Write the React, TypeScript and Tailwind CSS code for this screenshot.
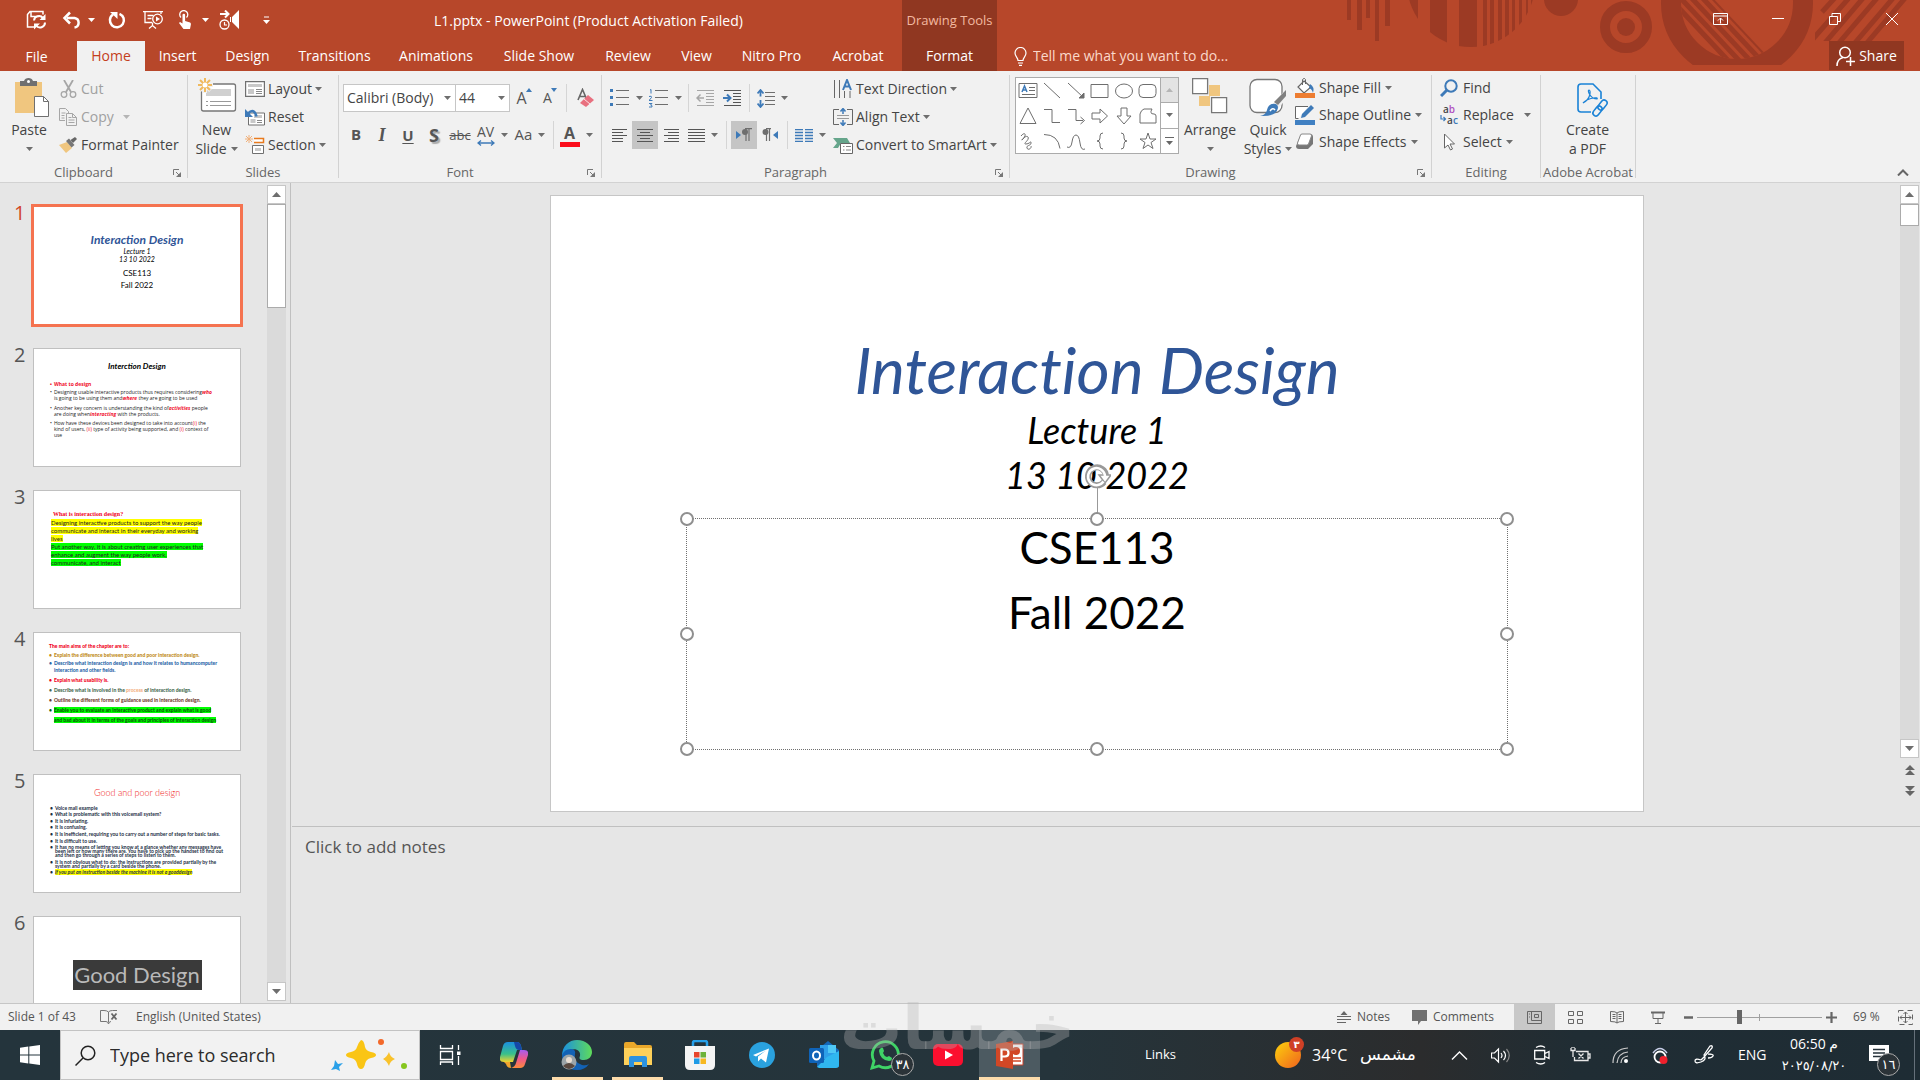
import React from 'react';
import clsx from 'clsx';

const GRAY = '#6e6e6e';
const BLUE = '#3e7ab8';
const SAND = '#f0c67f';

type IconProps = { w: number; h: number; children: React.ReactNode; className?: string };

const Icon: React.FC<IconProps> = ({ w, h, children, className }) => (
  <svg width={w} height={h} viewBox={`0 0 ${w} ${h}`} fill="none" className={clsx('shrink-0', className)} aria-hidden="true">
    {children}
  </svg>
);

const Caret = ({ className }: { className?: string }) => (
  <Icon w={7} h={4} className={className ?? 'text-[#6e6e6e]'}>
    <path d="M0 0h7L3.5 4z" fill="currentColor" />
  </Icon>
);

/* ---------- title bar ---------- */

const HeaderPattern = () => (
  <svg viewBox="1340 0 580 71" className="absolute right-0 top-0 h-[71px] w-[580px]" aria-hidden="true">
    <defs>
      <clipPath id="dome"><circle cx="1471" cy="-17" r="64" /></clipPath>
      <clipPath id="ringIn"><circle cx="1737" cy="3" r="56" /></clipPath>
      <clipPath id="ringCut"><rect x="1640" y="0" width="200" height="65" /></clipPath>
      <clipPath id="rays"><rect x="1815" y="0" width="105" height="41" /></clipPath>
    </defs>
    <g fill="#9c3a24">
      <path d="M1347 0h4v20h-4zM1357 0h5v30h-5zM1366 0h4v18h-4zM1375 0h4v41h-4zM1385 0h5v26h-5z" />
      <g clipPath="url(#dome)">
        <path d="M1405 0h13v50h-13zM1430 0h17v50h-17zM1459 0h18v50h-18zM1483 0h4v50h-4zM1490 0h4v50h-4zM1498 0h4v50h-4zM1505 0h4v50h-4zM1512 0h3v50h-3zM1519 0h3v50h-3zM1526 0h2v50h-2zM1531 0h2v50h-2z" />
      </g>
      <circle cx="1561" cy="-1" r="17" />
      <circle cx="1626" cy="27" r="9" />
    </g>
    <g fill="none" stroke="#9c3a24">
      <circle cx="1626" cy="27" r="21" strokeWidth="10" />
      <circle cx="1737" cy="3" r="66" strokeWidth="20" clipPath="url(#ringCut)" />
      <g clipPath="url(#ringIn)" strokeWidth="5">
        <path d="M1662 -10l75 80M1673 -10l75 80M1684 -10l75 80M1695 -10l75 80" />
        <path d="M1704 -10l75 80" strokeWidth="2" />
      </g>
      <g clipPath="url(#rays)" strokeWidth="5">
        <path d="M1842 -10l-20 22M1856 -10l-44 50M1870 -10l-46 54M1884 -10l-46 54M1900 -10l-46 54M1912 -10l-46 54" />
      </g>
    </g>
  </svg>
);

const QuickAccess = () => (
  <div className="flex h-[39px] items-center pl-[26px] text-white">
    <button aria-label="Save" className="w-[36px]">
      <Icon w={22} h={20}>
        <g stroke="currentColor" strokeWidth="1.5">
          <path d="M8 17H1.5V4.500L4 1.500h13v3M5 1.500v5h8" />
          <path d="M8 10.500a5 5 0 0 1 9-2.500M19 12.500a5 5 0 0 1-9 3" strokeWidth="2" />
        </g>
        <path d="M19.500 4v6h-6zM8 19.500v-6h6z" fill="currentColor" />
      </Icon>
    </button>
    <button aria-label="Undo" className="w-[22px]">
      <Icon w={20} h={18}>
        <path d="M5 7h7.500a4.800 4.800 0 0 1 0 9.500" stroke="currentColor" strokeWidth="2.500" />
        <path d="M8 1.500L2.500 7 8 12.500" stroke="currentColor" strokeWidth="2.500" />
      </Icon>
    </button>
    <span className="flex w-[24px] pl-1"><Caret className="text-white" /></span>
    <button aria-label="Repeat" className="w-[35px]">
      <Icon w={18} h={18}>
        <path d="M11.500 2.800A7 7 0 1 1 5 3.500" stroke="currentColor" strokeWidth="2.500" />
        <path d="M2 1h7.500v7z" fill="currentColor" />
      </Icon>
    </button>
    <button aria-label="Start from beginning" className="w-[34px]">
      <Icon w={21} h={20}>
        <g stroke="currentColor" strokeWidth="1.300">
          <path d="M0 1.700h20M2 2v10.500h7M18 2v2M4.500 5.500h6M4.500 8.500h4M9.500 12.500v4M6 18.500l3.500-3 3.500 3" />
          <circle cx="14.500" cy="9" r="4.800" />
        </g>
        <path d="M13 6.500v5l4-2.500z" fill="currentColor" />
      </Icon>
    </button>
    <button aria-label="Touch mode" className="w-[18px]">
      <Icon w={16} h={20}>
        <path d="M4 7.500a4 4 0 1 1 5.500 0" stroke="currentColor" strokeWidth="1.300" />
        <path d="M5.500 5a1.300 1.300 0 0 1 2.600 0v6l5 1.500q1 .5.8 2L13 19H6.500L2 13l1-1 2.500 1.500z" fill="currentColor" />
      </Icon>
    </button>
    <span className="flex w-[20px] justify-center"><Caret className="text-white" /></span>
    <button aria-label="Rehearse audio" className="ml-1 w-[38px]">
      <Icon w={21} h={20}>
        <path d="M20 0v19l-7-7V7zM12 7v5h-1V7z" fill="currentColor" />
        <path d="M1 4h8M6 .5L9.500 4 6 7.500" stroke="currentColor" strokeWidth="2" />
        <circle cx="5.500" cy="14.500" r="4.500" stroke="currentColor" strokeWidth="1.300" />
        <path d="M5.500 12v3h2.500" stroke="currentColor" strokeWidth="1.200" />
      </Icon>
    </button>
    <button aria-label="Customize toolbar" className="w-[18px]">
      <Icon w={7} h={8} className="mx-auto"><path d="M1 1h5" stroke="currentColor" /><path d="M0 4h7L3.500 8z" fill="currentColor" /></Icon>
    </button>
  </div>
);

const TABS = [
  { name: 'Insert', w: 'w-[65px]' },
  { name: 'Design', w: 'w-[75px]' },
  { name: 'Transitions', w: 'w-[99px]' },
  { name: 'Animations', w: 'w-[104px]' },
  { name: 'Slide Show', w: 'w-[102px]' },
  { name: 'Review', w: 'w-[76px]' },
  { name: 'View', w: 'w-[61px]' },
  { name: 'Nitro Pro', w: 'w-[89px]' },
  { name: 'Acrobat', w: 'w-[84px]' },
];

const Header = () => (
  <header className="relative flex h-[71px] justify-between bg-[#b7472a] text-sm text-white">
    <HeaderPattern />
    <div className="relative flex">
      <div className="w-[902px]">
        <div className="flex h-[41px]">
          <QuickAccess />
          <h1 className="flex-1 self-center pl-[159px] text-sm">L1.pptx - PowerPoint (Product Activation Failed)</h1>
        </div>
        <nav className="flex h-[30px]">
          <button className="w-[77px] pr-1 pt-px">File</button>
          <button className="w-[68px] bg-[#f1f1f1] text-[#c43e1c]">Home</button>
          {TABS.map((t) => (
            <button key={t.name} className={t.w}>{t.name}</button>
          ))}
        </nav>
      </div>
      <div className="flex w-[95px] flex-col bg-[#903721] text-center">
        <span className="h-[41px] pt-[11px] text-[13px] text-[#f3b9a0]">Drawing Tools</span>
        <button className="h-[30px]">Format</button>
      </div>
      <label className="flex h-[30px] items-center self-end pl-[17px]">
        <Icon w={13} h={19}>
          <path d="M4 13.500c0-3-3-4-3-7.500a5.500 5.500 0 0 1 11 0c0 3.500-3 4.500-3 7.500zM4 16h5M5 18.300h3" stroke="#fff" strokeWidth="1.200" />
        </Icon>
        <input aria-label="Tell me" placeholder="Tell me what you want to do..." className="ml-1.5 w-[220px] bg-transparent outline-none placeholder:text-[#fbd9cb]" />
      </label>
    </div>
    <div className="relative flex flex-col items-end">
      <div className="flex h-[41px] items-center pb-1">
        <button aria-label="Ribbon display options" className="grid w-[57px] place-items-center">
          <Icon w={15} h={12}><path d="M.5.5h14v11H.5zM.5 3h14M7.500 10.500V5M5 7.500L7.500 5 10 7.500" stroke="#fff" /></Icon>
        </button>
        <button aria-label="Minimize" className="grid w-[57px] place-items-center"><Icon w={12} h={1}><path d="M0 .500h12" stroke="#fff" strokeWidth="1" /></Icon></button>
        <button aria-label="Restore" className="grid w-[57px] place-items-center"><Icon w={12} h={12}><path d="M.5 3.500h8v8h-8zM3 3V.500h8.500v8H9" stroke="#fff" /></Icon></button>
        <button aria-label="Close" className="grid w-[57px] place-items-center"><Icon w={12} h={12}><path d="M0 0l12 12M12 0L0 12" stroke="#fff" /></Icon></button>
      </div>
      <button className="mr-4 flex h-[29px] w-[75px] items-center justify-center gap-1 bg-[#903721]">
        <Icon w={19} h={20}>
          <circle cx="9" cy="6.500" r="5.300" stroke="#fff" strokeWidth="1.500" />
          <path d="M1 20q0-7 6-8.500M10 15.500h9M14.500 11v9" stroke="#fff" strokeWidth="1.500" />
        </Icon>
        Share
      </button>
    </div>
  </header>
);

/* ---------- ribbon ---------- */

const Group = ({ label, width, launcher, children }: { label: string; width: string; launcher?: boolean; children: React.ReactNode }) => (
  <section className={clsx('flex shrink-0', width)} aria-label={label}>
    <div className="flex flex-1 flex-col">
      <div className="flex h-[92px]">{children}</div>
      <div className={clsx('relative flex h-[18px] items-center justify-center whitespace-nowrap text-[13px] text-[#666]', launcher && 'pr-5')}>
        {label}
        {launcher && (
          <button aria-label={`${label} settings`} className="absolute right-1.5 top-[6px]">
            <Icon w={8} h={8}><path d="M.5 6V.500H6M3 3l3 3" stroke="#777" /><path d="M8 3v5H3z" fill="#777" /></Icon>
          </button>
        )}
      </div>
    </div>
    <div className="my-1 w-px bg-[#d2d2d2]" />
  </section>
);

const Row = ({ icon, label, caret, gap = '', muted, tight }: { icon: React.ReactNode; label: string; caret?: boolean; gap?: string; muted?: boolean; tight?: boolean }) => (
  <button className={clsx('flex items-center whitespace-nowrap', tight ? 'h-[27px] gap-1' : 'h-7 gap-[3px]', muted ? 'text-[#a0a0a0]' : 'text-[#444]')}>
    <span className="grid w-5 place-items-center">{icon}</span>
    {label}
    {caret && <Caret className={clsx(gap, muted ? 'text-[#b5b5b5]' : 'text-[#6e6e6e]')} />}
  </button>
);

const Big = ({ icon, top, bottom, width, noCaret }: { icon: React.ReactNode; top: string; bottom?: string; width: string; noCaret?: boolean }) => (
  <button className={clsx('flex flex-col items-center pt-1.5 text-[#444]', width)}>
    <span className="grid h-[42px] place-items-center">{icon}</span>
    <span className="h-5 leading-[22px]">{top}</span>
    <span className="flex h-5 items-center gap-1 leading-5">{bottom}{!noCaret && <Caret />}</span>
  </button>
);

const Divider = ({ width }: { width: string }) => (
  <span className={clsx('flex h-7 justify-center', width)}><i className="w-px bg-[#d5d5d5]" /></span>
);

const Tool = ({ width, label, on, caret, children }: { width: string; label: string; on?: boolean; caret?: boolean; children: React.ReactNode }) => (
  <button aria-label={label} className={clsx('flex h-7 items-center justify-center text-[#555]', width, caret && 'gap-1.5', on && 'bg-[#c5c5c5]')}>
    {children}
    {caret && <Caret />}
  </button>
);

const lines = (ys: number[], x1: number[], x2: number[]) => ys.map((y, i) => `M${x1[i % x1.length]} ${y}.500H${x2[i % x2.length]}`).join('');

const ClipboardGroup = () => (
  <Group label="Clipboard" width="w-[188px]" launcher>
    <Big
      width="w-[58px]"
      top="Paste"
      icon={
        <Icon w={36} h={40} className="ml-1.5">
          <path d="M1 4h27v31H1z" fill={SAND} />
          <path d="M6 3h4c1-4 8-4 9 0h4v5H6z" fill="#707070" /><circle cx="14.500" cy="3.500" r="1.500" fill="#fff" />
          <path d="M20.500 18.500h9l5 5v15h-14z" fill="#fff" stroke="#707070" /><path d="M29.500 18.500v5h5" stroke="#707070" />
        </Icon>
      }
    />
    <div className="pt-1">
      <Row muted label="Cut" icon={<Icon w={17} h={18}><path d="M4 0l7 12M13 0L6 12" stroke="#a6a6a6" strokeWidth="1.800" /><circle cx="4" cy="14.500" r="2.800" stroke="#a6a6a6" strokeWidth="1.300" /><circle cx="13" cy="14.500" r="2.800" stroke="#a6a6a6" strokeWidth="1.300" /></Icon>} />
      <Row muted label="Copy" caret gap="ml-1.5" icon={<Icon w={18} h={18}><path d="M6 12.500H.500V.500h6l3 3V5M7.500 5.500h6l4 4v8h-10zM13.500 5.500v4h4M9.500 9.500h3M9.500 12h6M9.500 14.500h6M2.500 5h4M2.500 7.500h3M2.500 10h3" stroke="#a6a6a6" /></Icon>} />
      <Row label="Format Painter" icon={<Icon w={18} h={16}><path d="M0 8l8-3 5 6-6 5z" fill={SAND} /><path d="M7 4l3-2.500 5.500 6.500-3 2.500z" fill="#777" /><path d="M11.500 3L16 0l2 2-4 4z" fill="#666" /></Icon>} />
    </div>
  </Group>
);

const SlidesGroup = () => (
  <Group label="Slides" width="w-[151px]">
    <Big
      width="w-[57px]"
      top="New"
      bottom="Slide"
      icon={
        <Icon w={40} h={36} className="-mt-1.5">
          <rect x="4.500" y="7" width="34" height="27" rx="2" fill="#fff" stroke="#777" strokeWidth="1.300" />
          <path d="M9 12h25v7H9z" fill="#d0d0d0" />
          <path d="M13 24.500h21M13 28.500h21M9 24.500h2M9 28.500h2" stroke="#999" />
          <path d="M8 0v16M0 8h16M2.500 2.500l11 11M13.500 2.500l-11 11" stroke="#f1f1f1" strokeWidth="4" />
          <path d="M8 1v14M1 8h14M3 3l10 10M13 3L3 13" stroke="#f0b95c" strokeWidth="2" /><circle cx="8" cy="8" r="2.500" fill="#fff" />
        </Icon>
      }
    />
    <div className="pt-1">
      <Row label="Layout" caret icon={<Icon w={20} h={16}><path d="M.6.600h18.800v14.800H.600z" fill="#fff" stroke="#707070" strokeWidth="1.200" /><path d="M3 3h14v3H3zM3 8h6v5H3z" fill="#c8c8c8" /><path d="M11 8.500h6M11 10.500h6M11 12.500h6" stroke="#888" /></Icon>} />
      <Row label="Reset" icon={<Icon w={20} h={18}><path d="M4 5h15.500v12H3.500V9" fill="#fff" stroke="#707070" /><path d="M9 7h8v3H9zM5.500 11h5v4h-5z" fill="#c8c8c8" /><path d="M12 12.500h5M12 14.500h5" stroke="#888" /><path d="M3 5.500q6-6 8.500 3" stroke={BLUE} strokeWidth="2.500" /><path d="M0 1v8h8z" fill={BLUE} /></Icon>} />
      <Row label="Section" caret icon={<Icon w={20} h={20}><path d="M9 3.500h9.500v4H9" fill="#fff" stroke="#e87a1d" strokeWidth="1.500" /><path d="M7.500 10.500h11v8h-11z" fill="#fff" stroke="#707070" /><path d="M10 13h6v3h-6z" fill="#c8c8c8" /><path d="M4 0v8M0 4h8M1 1l6 6M7 1L1 7" stroke="#f0b07a" /></Icon>} />
    </div>
  </Group>
);

const selectBox = 'h-7 w-full appearance-none border border-[#c6c6c6] bg-white pl-[3px] text-sm text-[#444] outline-none';

const FontGroup = () => (
  <Group label="Font" width="w-[263px]" launcher>
    <div className="flex flex-col gap-[9px] pl-1 pt-[13px]">
      <div className="flex items-center">
        <label className="relative w-[113px]">
          <select aria-label="Font" className={selectBox}><option>Calibri (Body)</option></select>
          <Caret className="absolute right-[5px] top-3 text-[#6e6e6e]" />
        </label>
        <label className="relative -ml-px w-[55px]">
          <select aria-label="Font size" className={selectBox}><option>44</option></select>
          <Caret className="absolute right-[5px] top-3 text-[#6e6e6e]" />
        </label>
        <Tool width="w-7" label="Increase font size"><span className="text-base leading-5">A</span><Icon w={6} h={4} className="-ml-px mb-4"><path d="M0 4h6L3 0z" fill={BLUE} /></Icon></Tool>
        <Tool width="w-6" label="Decrease font size"><span className="text-sm leading-5">A</span><Icon w={6} h={4} className="-ml-px mb-4"><path d="M0 0h6L3 4z" fill={BLUE} /></Icon></Tool>
        <Divider width="w-2" />
        <Tool width="w-[30px]" label="Clear formatting">
          <Icon w={17} h={20}><path d="M1 12L5.500 1.500 10 12M2.500 8.500h6" stroke="#666" strokeWidth="1.600" /><path d="M3 15L11 7l6 5-8 7z" fill="#e8707f" /><path d="M7 11l6 5" stroke="#fff" strokeWidth=".8" /></Icon>
        </Tool>
      </div>
      <div className="flex items-center">
        <Tool width="w-[26px]" label="Bold"><b className="text-[15px]">B</b></Tool>
        <Tool width="w-[26px]" label="Italic"><b className="font-['Liberation_Serif'] text-lg italic">I</b></Tool>
        <Tool width="w-[26px]" label="Underline"><b className="text-[15px] leading-5 underline underline-offset-2">U</b></Tool>
        <Tool width="w-[26px]" label="Shadow"><b className="text-lg text-shadow-[2px_2px_1px_#aaa]">S</b></Tool>
        <Tool width="w-[26px]" label="Strikethrough"><span className="text-[13px] line-through">abc</span></Tool>
        <Tool width="w-[38px]" label="Character spacing" caret>
          <span className="flex flex-col items-center"><span className="text-sm leading-4">AV</span><Icon w={18} h={6}><path d="M1 3h16M4 .5L1 3l3 2.500M14 .5L17 3l-3 2.500" stroke={BLUE} strokeWidth="1.300" /></Icon></span>
        </Tool>
        <Tool width="w-[38px]" label="Change case" caret><span className="text-[15px]">Aa</span></Tool>
        <Divider width="w-2" />
        <Tool width="w-[38px]" label="Font color" caret>
          <span className="flex w-5 flex-col items-center"><b className="text-base leading-[18px]">A</b><i className="h-[5px] w-full bg-[#fb0d1b]" /></span>
        </Tool>
      </div>
    </div>
  </Group>
);

const ParagraphGroup = () => (
  <Group label="Paragraph" width="w-[408px]" launcher>
    <div className="flex w-[231px] flex-col gap-[9px] pl-1 pt-[13px]">
      <div className="flex items-center">
        <Tool width="w-[40px]" label="Bullets" caret><Icon w={20} h={18}><path d="M0 0h3v3H0zM0 7h3v3H0zM0 14h3v3H0z" fill={BLUE} /><path d={lines([1, 8, 15], [6], [19])} stroke={GRAY} /></Icon></Tool>
        <Tool width="w-[38px]" label="Numbering" caret>
          <Icon w={20} h={19}><path d="M1 1l1-.5v4M0 7.500q3-1 2.500 1L0 11.500h3.500M0 14.500h3l-1.500 1.500q2 0 1.500 2H0" stroke={BLUE} /><path d={lines([1, 8, 15], [6], [19])} stroke={GRAY} /></Icon>
        </Tool>
        <Divider width="w-2" />
        <Tool width="w-[27px]" label="Decrease indent"><Icon w={19} h={17}><path d={lines([0, 3, 6, 9, 12, 15], [1, 10, 10, 10, 10, 1], [18])} stroke="#a6a6a6" /><path d="M8 8H1M4.500 4.500L1 8l3.500 3.500" stroke="#a6a6a6" strokeWidth="1.500" /></Icon></Tool>
        <Tool width="w-[26px]" label="Increase indent"><Icon w={19} h={17}><path d={lines([0, 3, 6, 9, 12, 15], [1, 10, 10, 10, 10, 1], [18])} stroke="#555" /><path d="M0 8h7M4 4.500L7.500 8 4 11.500" stroke={BLUE} strokeWidth="2" /></Icon></Tool>
        <Divider width="w-2" />
        <Tool width="w-[38px]" label="Line spacing" caret><Icon w={18} h={19}><path d={lines([3, 7, 11, 15], [8], [18])} stroke={GRAY} /><path d="M3.500 2v5.500M3.500 11v6M.5 4.500l3-3.500 3 3.500M.5 14.500l3 3.500 3-3.500" stroke={BLUE} strokeWidth="1.800" /></Icon></Tool>
      </div>
      <div className="flex items-center">
        <Tool width="w-[26px]" label="Align left"><Icon w={15} h={13}><path d={lines([0, 3, 6, 9], [0], [15, 11])} stroke="#555" /><path d="M0 12.500h11" stroke="#555" /></Icon></Tool>
        <Tool width="w-[26px]" label="Center" on><Icon w={16} h={13}><path d={lines([0, 3, 6, 9, 12], [0, 3], [16, 13])} stroke="#555" /></Icon></Tool>
        <Tool width="w-[26px]" label="Align right"><Icon w={15} h={13}><path d={lines([0, 3, 6, 9, 12], [0, 4], [15])} stroke="#555" /></Icon></Tool>
        <Tool width="w-[38px]" label="Justify" caret><Icon w={17} h={13}><path d={lines([0, 3, 6, 9, 12], [0], [17])} stroke="#555" /></Icon></Tool>
        <Divider width="w-[9px]" />
        <Tool width="w-[26px]" label="Left to right" on><Icon w={16} h={14}><path d="M0 3v8l5-4z" fill={BLUE} /><path d="M10 1v12M13 1v12M9 .700h7" stroke={GRAY} strokeWidth="1.200" /><circle cx="9" cy="4" r="3" fill={GRAY} /></Icon></Tool>
        <Tool width="w-[26px]" label="Right to left"><Icon w={16} h={14}><path d="M16 3v8l-5-4z" fill={BLUE} /><path d="M4.500 1v12M7.500 1v12M4 .700h5" stroke={GRAY} strokeWidth="1.200" /><circle cx="3.500" cy="4" r="3" fill={GRAY} /></Icon></Tool>
        <Divider width="w-2" />
        <Tool width="w-[38px]" label="Columns" caret><Icon w={18} h={13}><path d={lines([0, 3, 6, 9, 12], [0], [8])} stroke={BLUE} strokeWidth="1.400" /><path d={lines([0, 3, 6, 9, 12], [10], [18])} stroke={BLUE} strokeWidth="1.400" /></Icon></Tool>
      </div>
    </div>
    <div className="pt-1">
      <Row label="Text Direction" caret icon={<Icon w={20} h={20}><path d="M1.500 1v18M6.500 1v18M11.500 12v7M17 12v7" stroke="#666" /><path d="M10 11L14 1l4 10M11.500 7.500h5" stroke={BLUE} strokeWidth="2" /></Icon>} />
      <Row label="Align Text" caret icon={<Icon w={20} h={18}><path d="M6 1.500H.500v15H6M14 1.500h5.500v15H14" stroke="#666" /><path d="M4 7.500h12M4 10.500h12" stroke="#999" /><path d="M10 1v5M10 12v5M7.500 3.500L10 .500l2.500 3M7.500 14.500l2.500 3 2.500-3" stroke={BLUE} strokeWidth="1.500" /></Icon>} />
      <Row label="Convert to SmartArt" caret icon={<Icon w={20} h={17}><path d="M0 1h14l3 5h-9l-3 5H0l4-5z" fill="#65a58b" /><path d="M7.500 6.500h12v10h-12z" fill="#fff" stroke="#666" /><path d="M10 9.500h1.500M13 9.500h5M10 13h1.500M13 13h5" stroke="#888" /></Icon>} />
    </div>
  </Group>
);

const SHAPES: React.ReactNode[] = [
  <g key="tx"><path d="M1 2.500h18v14H1z" /><path d="M11 6.500h6M11 9.500h6M4 13.500h13" /><path d="M4 11l2.500-6L9 11M5 9h3" stroke={BLUE} strokeWidth="1.500" /></g>,
  <path key="ln" d="M2 2l16 15" />,
  <g key="ar"><path d="M2 2l16 15" /><path d="M13 17h5v-5z" fill={GRAY} /></g>,
  <path key="re" d="M1 3.500h17v13H1z" />,
  <ellipse key="el" cx="10" cy="10" rx="8.500" ry="7" />,
  <rect key="rr" x="1" y="3.500" width="17" height="13" rx="4" />,
  <path key="tr" d="M10 2l8 15.500H2z" />,
  <path key="ec" d="M2 3.500h8v13h8" />,
  <g key="ea"><path d="M2 3.500h8v11h7" /><path d="M14.500 11l4 3.500-4 3.500" /></g>,
  <path key="ra" d="M2 7h8V3l7.500 7-7.500 7v-4H2z" />,
  <path key="da" d="M7 2h6v8h4l-7 8-7-8h4z" />,
  <path key="ff" d="M2 17V8q1-4 4-5h8q-3 5 2 5 2 0 2 2v7z" />,
  <path key="sc" d="M3 5c4-5 6-1 2 3s3-5 5-2-6 7-2 7 5-4 5-1-5 2-4 5 5 0 4-2" />,
  <path key="ac" d="M2 3.500q14 0 16 14" />,
  <path key="cv" d="M1 16q4 2 5-5t4-7 4 8 5 6" />,
  <path key="lb" d="M13 2q-3 0-3 3v2q0 3-3 3 3 0 3 3v2q0 3 3 3" />,
  <path key="rb" d="M7 2q3 0 3 3v2q0 3 3 3-3 0-3 3v2q0 3-3 3" />,
  <path key="st" d="M10 2l2 6h6l-5 3.500 2 6-5-3.500-5 3.500 2-6L2 8h6z" />,
];

const DrawingGroup = () => (
  <Group label="Drawing" width="w-[422px]" launcher>
    <div className="ml-[5px] mt-1.5 flex h-[77px] w-[164px] border border-[#ababab] bg-white">
      <div className="grid flex-1 grid-cols-6 grid-rows-3 place-items-center">
        {SHAPES.map((s, i) => (
          <button key={i} aria-label={`Shape ${i + 1}`}><Icon w={20} h={20}><g stroke={GRAY}>{s}</g></Icon></button>
        ))}
      </div>
      <div className="flex w-[18px] flex-col divide-y divide-[#ababab] border-l border-[#ababab]">
        <button aria-label="Scroll up" className="grid flex-1 place-items-center bg-[#e3e3e3]"><Icon w={7} h={4} className="rotate-180"><path d="M0 0h7L3.500 4z" fill="#b5b5b5" /></Icon></button>
        <button aria-label="Scroll down" className="grid flex-1 place-items-center"><Caret /></button>
        <button aria-label="More shapes" className="grid flex-1 place-items-center"><Icon w={9} h={8}><path d="M0 .500h9" stroke="#666" /><path d="M1 4h7L4.500 8z" fill="#666" /></Icon></button>
      </div>
    </div>
    <Big width="w-[62px]" top="Arrange" icon={<Icon w={36} h={36} className="-mt-1"><path d="M17 7h11v11H17zM7 18h11v10H7z" fill={SAND} /><path d="M.600.600h15v15h-15zM19.600 19.600h15v15h-15z" fill="#fff" stroke="#777" strokeWidth="1.300" /></Icon>} />
    <Big
      width="w-[54px]"
      top="Quick"
      bottom="Styles"
      icon={
        <Icon w={38} h={40}>
          <rect x="1" y="1.500" width="32" height="33" rx="7" fill="#fff" stroke="#777" strokeWidth="1.300" />
          <path d="M38 10v10l-10 12-5-5z" fill="#f1f1f1" /><path d="M37 12v6l-8 9-4-3z" fill="#808080" />
          <path d="M23 26q6-1 6 4-2 9-18 8 6-1 7-6 1-5 5-6z" fill={BLUE} /><path d="M21 33q3-4 5-1" stroke="#fff" strokeWidth="1.500" />
        </Icon>
      }
    />
    <div className="pt-[3px]">
      <Row tight label="Shape Fill" caret icon={<Icon w={20} h={20}><path d="M9 3l7 6-7 6-6-6z" fill="#fff" stroke="#666" strokeWidth="1.200" /><path d="M7.500 7V1.500q2-2.500 3 0V6" stroke="#666" /><path d="M15 6q5 3 3 9-1-4-4-5z" fill={BLUE} /><path d="M0 15h20v5H0z" fill="#ed7d31" /></Icon>} />
      <Row tight label="Shape Outline" caret icon={<Icon w={20} h={20}><path d="M13 1.500H.500v12h3" fill="#fff" stroke="#666" /><path d="M6 13l1-4 9-9 3 3-9 9z" fill={BLUE} /><path d="M0 15h20v5H0z" fill="#4080c2" /></Icon>} />
      <Row tight label="Shape Effects" caret icon={<Icon w={20} h={18}><path d="M6 1h9q3 0 3 3v7l-5 5H4q-3 0-3-3z" fill="#777" /><path d="M7 1h8q2 0 1.500 2l-3 8q-.5 1-2 1H4q-2 0-1.500-2l3-8Q6 1 7 1z" fill="#fff" stroke="#888" /></Icon>} />
    </div>
  </Group>
);

const EditingGroup = () => (
  <Group label="Editing" width="w-[109px]">
    <div className="pl-[7px] pt-[3px]">
      <Row tight label="Find" icon={<Icon w={18} h={18}><circle cx="11" cy="7" r="5.700" stroke={BLUE} strokeWidth="2" /><path d="M7 11L1 17" stroke={BLUE} strokeWidth="3" /></Icon>} />
      <Row tight label="Replace" caret gap="ml-1.5" icon={
        <span className="grid text-[10px] font-semibold leading-[11px]">
          <span>a<span className="text-[#b04fc0]">b</span></span>
          <span className="flex"><Icon w={7} h={7}><path d="M1 0v4h4M3.500 2l2 2-2 2" stroke={BLUE} strokeWidth="1.200" /></Icon>a<span className="text-[#3e7ab8]">c</span></span>
        </span>
      } />
      <Row tight label="Select" caret icon={<Icon w={12} h={18}><path d="M1.500 1v14l3.500-3 2.500 5 2-1L7 11h4.500z" fill="#fff" stroke="#666" /></Icon>} />
    </div>
  </Group>
);

const AcrobatGroup = () => (
  <Group label="Adobe Acrobat" width="w-[95px]">
    <Big
      width="w-[93px]"
      top="Create"
      bottom="a PDF"
      noCaret
      icon={
        <Icon w={32} h={37} className="ml-2.5 mt-1">
          <g stroke="#1a82d6" strokeWidth="1.600">
            <path d="M14 30H4q-3 0-3-3V5q0-3 3-3h12l8 8v7" />
            <path d="M6 21c8-4 8-13 6-13s1 9 8 9c2-2-8-2-14 4z" strokeWidth="1.200" />
            <rect x="15" y="26" width="11" height="6" rx="3" transform="rotate(-52 20.500 29)" /><rect x="20" y="20" width="11" height="6" rx="3" transform="rotate(-52 25.500 23)" />
          </g>
        </Icon>
      }
    />
  </Group>
);

const Ribbon = () => (
  <div className="flex h-[112px] border-b border-[#d2d2d2] bg-[#f1f1f1] text-sm">
    <ClipboardGroup />
    <SlidesGroup />
    <FontGroup />
    <ParagraphGroup />
    <DrawingGroup />
    <EditingGroup />
    <AcrobatGroup />
    <button aria-label="Collapse ribbon" className="mb-1.5 ml-auto mr-[11px] self-end"><Icon w={12} h={7}><path d="M1 6.500l5-5 5 5" stroke="#666" strokeWidth="2" /></Icon></button>
  </div>
);

/* ---------- slide thumbnails ---------- */

const Thumb = ({ n, active, children }: { n: number; active?: boolean; children: React.ReactNode }) => (
  <li className="mb-[23px] flex h-[119px]">
    <span className={clsx('w-[33px] pl-[14px] text-xl leading-[14px]', active ? 'text-[#d24726]' : 'text-[#555]')}>{n}</span>
    <div className={clsx("h-[119px] w-[208px] overflow-hidden border bg-white font-['Lato',sans-serif] whitespace-nowrap", active ? 'border-[#f57350] outline-2 outline-[#f57350]' : 'border-[#c0c0c0]')}>
      {children}
    </div>
  </li>
);

const Em = ({ children }: { children: React.ReactNode }) => <b className="italic text-[#f0102c]">{children}</b>;

const Li = ({ className, children }: { className?: string; children: React.ReactNode }) => (
  <li className={clsx('flex gap-0.5', className)}><span>•</span><div>{children}</div></li>
);

const Thumbnails = () => (
  <ol className="min-w-0 flex-1 overflow-hidden pt-[23px]">
    <Thumb n={1} active>
      <div className="flex flex-col items-center pt-[26px]">
        <b className="text-[12px] italic leading-[14px] text-[#2f5597]">Interaction Design</b>
        <i className="text-[7px] leading-[8px]">Lecture 1</i>
        <i className="text-[7px] leading-[8px]">13 10 2022</i>
        <span className="mt-1 text-[8px] leading-[12px]">CSE113</span>
        <span className="text-[8px] leading-[12px]">Fall 2022</span>
      </div>
    </Thumb>
    <Thumb n={2}>
      <b className="block pt-[11px] text-center text-[8px] italic leading-[12px]">Interction Design</b>
      <ul className="pl-4 pt-[9px] font-['Open_Sans',sans-serif] text-[5px] leading-[6px] text-[#222]">
        <Li className="font-bold text-[#f0102c]">What to design</Li>
        <Li className="mt-0.5">Designing usable interactive products thus requires considering<Em>who</Em><br />is going to be using them and<Em>where</Em> they are going to be used</Li>
        <Li className="mt-1">Another key concern is understanding the kind of<Em>activities</Em> people<br />are doing when<Em>interacting</Em> with the products.</Li>
        <Li className="mt-[3px]">How have these devices been designed to take into account<span className="text-[#f0102c]">(i)</span> the<br />kind of users, <span className="text-[#f0102c]">(ii)</span> type of activity being supported, and <span className="text-[#f0102c]">(i)</span> context of<br />use</Li>
      </ul>
    </Thumb>
    <Thumb n={3}>
      <div className="pl-[17px] pt-[18px] text-[6px] leading-[8px] text-[#222]">
        <b className="block pl-0.5 font-['Liberation_Serif',serif] text-[6px] leading-[10px] text-[#f00020]">What is interaction design?</b>
        <span className="bg-[#ffff00]">Designing interactive products to support the way people<br />communicate and interact in their everyday and working<br />lives</span><br />
        <span className="bg-[#00ff00]">Put another way, it is about creating user experiences that<br />enhance and augment the way people work,<br />communicate, and interact</span>
      </div>
    </Thumb>
    <Thumb n={4}>
      <div className="pl-[15px] pt-[10px] font-['Lato',sans-serif] text-[5px] font-black leading-[7px]">
        <p className="text-[#f00020]">The main aims of the chapter are to:</p>
        <ul>
          <Li className="mt-0.5 text-[#c08a20]">Explain the difference between good and poor interaction design.</Li>
          <Li className="mt-px text-[#2a66a8]">Describe what interaction design is and how it relates to humancomputer<br />interaction and other fields.</Li>
          <Li className="mt-[3px] text-[#f00020]">Explain what usability is.</Li>
          <Li className="mt-[3px] text-[#476a52]">Describe what is involved in the <span className="text-[#f4b183]">process</span> of interaction design.</Li>
          <Li className="mt-[3px] text-[#703c2c]">Outline the different forms of guidance used in interaction design.</Li>
          <Li className="mt-px leading-[10px] text-[#0a5a0a]"><span className="bg-[#00ff00]">Enable you to evaluate an interactive product and explain what is good<br />and bad about it in terms of the goals and principles of interaction design</span></Li>
        </ul>
      </div>
    </Thumb>
    <Thumb n={5}>
      <p className="pt-3 text-center text-[9px] font-light leading-[11px] text-[#f01818]">Good and poor design</p>
      <ul className="pl-4 pt-2 text-[5px] font-bold leading-[4px] text-[#222e44]">
        <Li>Voice mail example</Li>
        <Li className="mt-0.5">What is problematic with this voicemail system?</Li>
        <Li className="mt-[3px]">It is infuriating.</Li>
        <Li className="mt-0.5">It is confusing.</Li>
        <Li className="mt-[3px]">It is inefficient, requiring you to carry out a number of steps for basic tasks.</Li>
        <Li className="mt-[3px]">It is difficult to use.</Li>
        <Li className="mt-0.5">It has no means of letting you know at a glance whether any messages have<br />been left or how many there are. You have to pick up the handset to find out<br />and then go through a series of steps to listen to them.</Li>
        <Li className="mt-[3px]">It is not obvious what to do: the instructions are provided partially by the<br />system and partially by a card beside the phone.</Li>
        <Li className="mt-0.5"><i className="bg-[#ffff00]">If you put an instruction beside the machine it is not a gooddesign</i></Li>
      </ul>
    </Thumb>
    <Thumb n={6}>
      <p className="mx-auto mt-[43px] h-[30px] w-[129px] bg-[#3a3a3a] text-center text-[22px] leading-[30px] text-[#b9b9b9]">Good Design</p>
    </Thumb>
  </ol>
);

const ScrollButton = ({ up }: { up?: boolean }) => (
  <button aria-label={up ? 'Scroll up' : 'Scroll down'} className="grid h-[19px] w-full shrink-0 place-items-center border border-[#c6c6c6] bg-white">
    <Icon w={9} h={5} className={up ? 'rotate-180' : ''}><path d="M0 0h9L4.500 5z" fill="#6e6e6e" /></Icon>
  </button>
);

/* ---------- slide editor ---------- */

const HANDLES = [
  'left-0 top-0', 'left-1/2 top-0', 'left-full top-0', 'left-0 top-1/2',
  'left-full top-1/2', 'left-0 top-full', 'left-1/2 top-full', 'left-full top-full',
];

const Editor = () => (
  <div className="flex min-h-0 flex-1">
    <div className="flex flex-1 items-center justify-center pb-0.5 pl-0.5">
      <div className="flex aspect-[1094/617] w-[68.1%] flex-col items-center border border-[#c6c6c6] bg-white text-center font-['Lato',sans-serif] text-black">
        <div className="flex h-[322px] flex-col justify-end pb-5 italic">
          <h2 className="text-[64px] leading-[76px] text-[#2f5597] [font-variant-ligatures:none]">Interaction Design</h2>
          <p className="text-4xl leading-[45px]">Lecture 1<br />13 10 2022</p>
        </div>
        <div className="relative h-[232px] w-[75.3%] border border-dotted border-[#707070] text-[44px]">
          <p className="leading-[57px]">CSE113</p>
          <p className="mt-1 leading-[65px]">Fall 2022</p>
          <span className="absolute bottom-full left-1/2 h-8 w-px bg-[#999]" />
          <Icon w={28} h={28} className="absolute -top-14 left-1/2 -translate-x-1/2">
            <path d="M21 19a9 9 0 1 1 2-6" stroke="#999" strokeWidth="6" /><path d="M16 12h12l-6 8z" fill="#fff" stroke="#999" strokeWidth="1.500" />
            <path d="M20.500 18.500a8.500 8.500 0 1 1 1.500-5.500" stroke="#fff" strokeWidth="2.500" />
          </Icon>
          {HANDLES.map((pos) => (
            <span key={pos} className={clsx('absolute size-[14px] -translate-x-1/2 -translate-y-1/2 rounded-full border-2 border-[#8f8f8f] bg-white', pos)} />
          ))}
        </div>
      </div>
    </div>
    <div className="flex w-5 flex-col pt-0.5 pr-px">
      <ScrollButton up />
      <div className="flex-1 bg-[#dadada]"><div className="h-[22px] border border-[#ababab] bg-white" /></div>
      <ScrollButton />
      <div className="flex h-[68px] flex-col items-center gap-[11px] pt-[7px]">
        <button aria-label="Previous slide"><Icon w={10} h={10}><path d="M0 5h10L5 0zM0 10h10L5 5z" fill="#666" /></Icon></button>
        <button aria-label="Next slide"><Icon w={10} h={10}><path d="M0 0h10L5 5zM0 5h10l-5 5z" fill="#666" /></Icon></button>
      </div>
    </div>
  </div>
);

/* ---------- status bar ---------- */

const StatusBar = () => (
  <footer className="relative flex h-[27px] shrink-0 items-center border-t border-[#c6c6c6] bg-[#f1f1f1] text-[12px] text-[#555]">
    <span className="w-[100px] pl-2">Slide 1 of 43</span>
    <Icon w={18} h={16}><path d="M8.500 13.500V3Q7 1.500 4 1.500H.500v11H6q2 0 2.500 2.500.5-2.500 2.500-2.500M8.500 3q1-1.500 4-1.500h4.500" stroke="#777" /><path d="M11.500 4.500l5 6M16.500 4.500l-5 6" stroke="#666" strokeWidth="1.800" /></Icon>
    <span className="pl-[18px]">English (United States)</span>
    <div className="ml-auto flex h-full items-center">
      <button className="mr-[22px] flex items-center gap-1.5"><Icon w={14} h={13}><path d="M3.500 4L7 0l3.500 4z" fill="#666" /><path d="M0 5.500h14M0 8.500h14M0 11.500h9" stroke="#666" /></Icon>Notes</button>
      <button className="mr-5 flex items-center gap-1.5"><Icon w={15} h={15}><path d="M0 0h15v11H9l-3 4v-4H0z" fill="#707070" /></Icon>Comments</button>
      <button aria-label="Normal view" className="grid h-full w-[41px] place-items-center bg-[#c8c8c8]"><Icon w={15} h={13}><path d="M.500.500h14v12H.500zM4.500.500v9M4.500 9.500h10M7.500 3.500h4v3h-4zM2 3h1M2 6h1" stroke="#666" /></Icon></button>
      <button aria-label="Slide sorter" className="grid w-[41px] place-items-center"><Icon w={15} h={13}><path d="M.500.500h5v4h-5zM9.500.500h5v4h-5zM.500 8.500h5v4h-5zM9.500 8.500h5v4h-5z" stroke="#666" /></Icon></button>
      <button aria-label="Reading view" className="grid w-[41px] place-items-center"><Icon w={14} h={13}><path d="M7 12V2Q6 .500.500.500v10Q6 10.500 7 12q1-1.500 6.500-1.500V.500Q8 .500 7 2M2.500 3.500h3M2.500 5.500h3M2.500 7.500h3M8.500 3.500h3M8.500 5.500h3M8.500 7.500h3" stroke="#666" /></Icon></button>
      <button aria-label="Slide show" className="grid w-[41px] place-items-center"><Icon w={14} h={13}><path d="M0 1.500h14" stroke="#666" strokeWidth="2" /><path d="M2 2v5.500h10V2M7 8v4M4 12.500h6" stroke="#666" /></Icon></button>
      <button aria-label="Zoom out" className="ml-1.5"><Icon w={9} h={3}><path d="M0 1.500h9" stroke="#666" strokeWidth="2.500" /></Icon></button>
      <input
        type="range"
        aria-label="Zoom"
        min={0}
        max={100}
        defaultValue={33}
        className="mx-1 h-4 w-[125px] appearance-none bg-[linear-gradient(#a0a0a0,#a0a0a0),linear-gradient(#a0a0a0,#a0a0a0)] bg-[length:100%_1px,1px_7px] bg-center bg-no-repeat [&::-webkit-slider-thumb]:h-[14px] [&::-webkit-slider-thumb]:w-[5px] [&::-webkit-slider-thumb]:appearance-none [&::-webkit-slider-thumb]:bg-[#666]"
      />
      <button aria-label="Zoom in"><Icon w={11} h={11}><path d="M0 5.500h11M5.500 0v11" stroke="#666" strokeWidth="2.200" /></Icon></button>
      <span className="w-[61px] whitespace-nowrap pl-4">69 %</span>
      <button aria-label="Fit slide" className="mr-[7px]"><Icon w={15} h={15}><path d="M.500.500h14v14H.500z" stroke="#666" strokeDasharray="5 4" /><path d="M7.500 2v11M2 7.500h11M5.500 4l2-2 2 2M5.500 11l2 2 2-2M4 5.500l-2 2 2 2M11 5.500l2 2-2 2" stroke="#666" /></Icon></button>
    </div>
    <span dir="rtl" lang="ar" className="pointer-events-none absolute left-[845px] top-0 z-10 w-[230px] text-center font-['DejaVu_Sans',sans-serif] text-[62px] font-bold leading-[48px] text-[#b4b4b4]/35">خمسات</span>
  </footer>
);

/* ---------- taskbar ---------- */

const Badge = ({ children, className }: { children: React.ReactNode; className: string }) => (
  <span className={clsx("absolute grid size-[23px] place-items-center rounded-full border border-[#aaa] bg-[#2b3338] font-['DejaVu_Sans',sans-serif] text-[13px] text-white", className)}>{children}</span>
);

const TaskButton = ({ label, width, open, active, children }: { label: string; width: string; open?: boolean; active?: boolean; children: React.ReactNode }) => (
  <button aria-label={label} className={clsx('relative grid place-items-center', width, active && 'bg-[#4c5a61]')}>
    {children}
    {open && <span className={clsx('absolute bottom-0 h-[3px] bg-[#fddcab]', active ? 'w-full' : 'w-[51px]')} />}
  </button>
);

const Taskbar = () => (
  <div className="flex h-[50px] shrink-0 bg-[linear-gradient(90deg,#24343c_0%,#25343b_55%,#2b2c2d_74%,#202d34_82%,#1e2c34_100%)] text-white">
    <button aria-label="Start" className="grid w-[60px] place-items-center"><Icon w={20} h={20}><path d="M0 2.700l8.300-1.200v8H0zM9.300 1.400L20 0v9.500H9.300zM0 10.500h8.300v8L0 17.300zM9.300 10.500H20V20L9.300 18.500z" fill="#fff" /></Icon></button>
    <label className="flex w-[360px] items-center border border-[#c3c3c3] bg-[#f2f2f2] pl-[14px]">
      <Icon w={21} h={21}><circle cx="13" cy="8" r="6.800" stroke="#222" strokeWidth="1.500" /><path d="M8 13L.500 20.500" stroke="#222" strokeWidth="1.500" /></Icon>
      <input aria-label="Search" placeholder="Type here to search" className="ml-[14px] w-[220px] bg-transparent text-[18px] outline-none placeholder:text-[#2b2b2b]" />
      <Icon w={78} h={32}>
        <path d="M31 1q3 0 4 7 1 4 6 5 5 1 5 3t-5 3-6 6-4 5q-3 0-4-5-1-5-6-6t-5-3 5-3 6-5 4-7z" fill="#fac515" />
        <path d="M59 13q1 5 6 7-5 2-6 7-2-5-6-7 4-2 6-7z" fill="#f9c22b" /><path d="M5 21l3 4 5-1-4 4 1 4-4-2-5 1 3-4z" fill="#2aa0e8" />
        <circle cx="51" cy="3" r="3" fill="#f3692a" /><circle cx="74" cy="27" r="3" fill="#86c61e" />
      </Icon>
    </label>
    <TaskButton label="Task view" width="w-[60px]"><Icon w={22} h={20}><path d="M1.500 0v3.500h12V0M1.500 6.500h12v8h-12zM1.500 20v-3h12v3M19.500 0v5M19.500 11v9" stroke="#fff" strokeWidth="1.300" /><path d="M18 6.500h3.500V10H18z" fill="#fff" /></Icon></TaskButton>
    <TaskButton label="Copilot" width="w-[68px]">
      <Icon w={28} h={26}>
        <defs>
          <linearGradient id="cpA" x1="0" y1="0" x2="0" y2="1"><stop stopColor="#1b8fe0" /><stop offset=".6" stopColor="#39c08a" /><stop offset="1" stopColor="#f2d22e" /></linearGradient>
          <linearGradient id="cpB" x1="0" y1="0" x2="0" y2="1"><stop stopColor="#a65cf0" /><stop offset=".5" stopColor="#f0588a" /><stop offset="1" stopColor="#fb8b3c" /></linearGradient>
        </defs>
        <path d="M8 0h9q3 0 4 4l1 4h-5l-4 12H4q-5 0-4-5L3 4q1-4 5-4z" fill="url(#cpA)" />
        <path d="M20 26h-9q4-1 5-5l4-13h4q5 0 4 5l-3 9q-1 4-5 4z" fill="url(#cpB)" /><path d="M14 0h3q3 0 4 4l1 4h-3q-3 0-4-4z" fill="#1547a8" />
        <path d="M4 20h6l1 6q-4 0-5-4z" fill="#f2a42e" />
      </Icon>
    </TaskButton>
    <TaskButton label="Edge" width="w-[58px]" open>
      <Icon w={32} h={32}>
        <defs><linearGradient id="edge" x1="0" y1="0" x2="1" y2="0"><stop stopColor="#1a8fe0" /><stop offset="1" stopColor="#5fdc5a" /></linearGradient></defs>
        <path d="M1 17C1 7 8 1 16 1c9 0 15 6 15 12 0 5-4 8-8 8-5 0-5-2-4-4 1-6-5-8-9-6Q3 13 1 17z" fill="url(#edge)" />
        <path d="M1 16Q4 9 11 10q4 1 3 5-2 8 7 11 4 1 7-1-4 6-12 6C6 31 1 24 1 16z" fill="#1262b5" />
        <circle cx="8" cy="23" r="7.500" fill="#9ba4a8" /><circle cx="8" cy="21" r="3" fill="#e9ddd2" /><path d="M2 27q6-6 12 0-6 6-12 0z" fill="#59483f" />
      </Icon>
    </TaskButton>
    <TaskButton label="File Explorer" width="w-[63px]" open><Icon w={28} h={26}><path d="M0 2q0-2 2-2h8l3 3h13q2 0 2 2v18H0z" fill="#e9a72a" /><path d="M0 6h28v17H0z" fill="#fdd05a" /><path d="M5 25v-9q0-2 2-2h14q2 0 2 2v9h-5v-5h-8v5z" fill="#2c92df" /></Icon></TaskButton>
    <TaskButton label="Microsoft Store" width="w-[62px]"><Icon w={30} h={30}><path d="M8 7V2.500q0-1.500 2-1.500h10q2 0 2 1.500V7" stroke="#26a0ea" strokeWidth="2.500" /><path d="M0 6h30v19q0 5-5 5H5q-5 0-5-5z" fill="#f4f4f4" /><path d="M9 12h5.500v5.500H9z" fill="#e8452c" /><path d="M15.500 12H21v5.500h-5.500z" fill="#6db33a" /><path d="M9 18.500h5.500V24H9z" fill="#1f9be6" /><path d="M15.500 18.500H21V24h-5.500z" fill="#f7b821" /></Icon></TaskButton>
    <TaskButton label="Telegram" width="w-[62px]"><Icon w={26} h={26}><circle cx="13" cy="13" r="13" fill="#2aa1de" /><path d="M4 13L20 6.500l-3 14-5-4-3 3v-5l8-6-10 6z" fill="#fff" /></Icon></TaskButton>
    <TaskButton label="Outlook" width="w-[62px]"><Icon w={30} h={28}><path d="M8 9L19 0l11 9v17H8z" fill="#1467b8" /><path d="M11 4h16v14H11z" fill="#2e9fe8" /><path d="M19 4h8v8h-8z" fill="#4fc8f5" /><path d="M8 26l10-10 12-6v14q0 3-3 3H10z" fill="#30b7f0" /><rect y="7" width="15" height="15" rx="1.500" fill="#0f63b8" /><ellipse cx="7.500" cy="14.500" rx="3.500" ry="4" stroke="#fff" strokeWidth="2" /></Icon></TaskButton>
    <TaskButton label="WhatsApp" width="w-[62px]">
      <Icon w={32} h={30}><path d="M2 28l2-7a13 13 0 1 1 5 5z" stroke="#3fd366" strokeWidth="2.800" /><path d="M11 8q1-1 2 0l1 3-1 2q1 3 4 4l2-1 3 2q0 3-3 3-9-1-10-10 0-2 2-3z" fill="#3fd366" /></Icon>
      <Badge className="left-[36px] top-[23px]">٣٨</Badge>
    </TaskButton>
    <TaskButton label="YouTube" width="w-[62px]"><Icon w={30} h={22}><rect width="30" height="22" rx="5" fill="#fb0f2f" /><path d="M12 6.500v9l8-4.500z" fill="#fff" /></Icon></TaskButton>
    <TaskButton label="PowerPoint" width="w-[61px]" open active><Icon w={28} h={28}><path d="M14 3h13v21H14z" fill="#fff" stroke="#c8412a" /><circle cx="20" cy="10" r="4" fill="#d24726" /><path d="M17 17h8M17 20h8" stroke="#d24726" strokeWidth="1.500" /><path d="M0 3l17-3v28L0 25z" fill="#d24726" /><path d="M5.500 20V8.500H9q3.500 0 3.500 3.500T9 15.500H6" stroke="#fff" strokeWidth="2.200" /></Icon></TaskButton>
    <div className="ml-auto flex items-center">
      <span className="w-[129px] text-[13px]">Links</span>
      <div className="flex items-center">
        <span className="relative"><Icon w={28} h={28}><defs><linearGradient id="sun" x1="0" y1="0" x2="1" y2="1"><stop stopColor="#fdd20c" /><stop offset="1" stopColor="#f0621e" /></linearGradient></defs><circle cx="14" cy="14" r="13" fill="url(#sun)" /></Icon>
          <b className="absolute -right-0.5 -top-1 grid size-[15px] place-items-center rounded-full bg-[#cf4026] font-['DejaVu_Sans',sans-serif] text-[10px]">٣</b></span>
        <span className="ml-2.5 w-[48px] whitespace-nowrap text-base">34°C</span>
        <span lang="ar" className="w-[81px] font-['DejaVu_Sans',sans-serif] text-[17px]">مشمس</span>
      </div>
      <button aria-label="Show hidden icons" className="w-[50px]"><Icon w={17} h={9} className="ml-2.5"><path d="M1 8.500l7.500-7.500 7.500 7.500" stroke="#fff" strokeWidth="1.400" /></Icon></button>
      <button aria-label="Volume" className="w-[43px]"><Icon w={20} h={17}><path d="M.500 6h3l4-4v13l-4-4h-3zM10 6q2 2.500 0 5M12.500 4q4 4.500 0 9" stroke="#fff" strokeWidth="1.200" /><path d="M15.500 2q5.500 6.500 0 13" stroke="#888" strokeWidth="1.200" /></Icon></button>
      <button aria-label="Meet now" className="w-[36px]"><Icon w={16} h={20}><path d="M.700 5.500h10v8.500H.700zM11 8.500l4-2v7l-4-2M2 2.500q5-3 9 0M2 17.500q5 3 9 0" stroke="#fff" strokeWidth="1.300" /></Icon></button>
      <button aria-label="Battery" className="w-[42px]"><Icon w={21} h={16}><path d="M6 4.500h12v9H4.500V10M18.500 7H20v4h-1.500M8.500 6.500l5 5M13.500 6.500l-5 5M1 1v2.500h4V1M3 4v6M2 0v1M4 0v1" stroke="#e8e8e8" strokeWidth="1.300" /></Icon></button>
      <button aria-label="Network" className="w-[40px]"><Icon w={17} h={17}><path d="M1 16Q1 2 16 1M5 16Q6 6 16 5M9 16q0-6 7-7" stroke="#ccc" strokeWidth="1.200" /><circle cx="14" cy="14" r="2" fill="#fff" /></Icon></button>
      <button aria-label="Security" className="w-[42px]"><Icon w={16} h={19}><path d="M1 7q7-9 14 0" stroke="#c9cfe8" strokeWidth="1.500" /><circle cx="8" cy="11" r="5.500" stroke="#fff" strokeWidth="1.800" /><circle cx="11.500" cy="14" r="4" fill="#f0202c" /></Icon></button>
      <button aria-label="Ink workspace" className="w-[44px]"><Icon w={21} h={20}><path d="M7 15q-6-2-6 1t6 1 3-7l6-9q3-1 2 2l-8 9-3 3M14 9q6 0 5 2t-5 2" stroke="#fff" strokeWidth="1.300" /></Icon></button>
      <span className="w-[41px] text-sm">ENG</span>
      <div className="w-[70px] text-center font-['Open_Sans','DejaVu_Sans',sans-serif] text-sm leading-[22px]">
        <div>06:50 <bdi>م</bdi></div>
        <div className="whitespace-nowrap font-['DejaVu_Sans',sans-serif] text-[13px]">٢٠٢٥/٠٨/٢٠</div>
      </div>
      <button aria-label="Notifications" className="relative ml-[20px] h-full w-[45px]">
        <Icon w={20} h={20}><path d="M0 0h20v16h-4v4l-5-4H0z" fill="#fff" /><path d="M4 4.500h12M4 8h12M4 11.500h8" stroke="#26323a" strokeWidth="1.300" /></Icon>
        <Badge className="left-[8px] top-[23px]">١٦</Badge>
      </button>
      <span className="mr-[5px] h-full w-px bg-[#65707a]" />
    </div>
  </div>
);

export default function App() {
  return (
    <div className="flex h-screen min-w-[1640px] flex-col overflow-hidden bg-[#e6e6e6] font-['Open_Sans',sans-serif]">
      <Header />
      <Ribbon />
      <main className="flex min-h-0 flex-1">
        <aside className="flex w-[291px] shrink-0 border-r border-[#c0c0c0]">
          <Thumbnails />
          <div className="mr-1 flex w-[19px] flex-col pb-0.5 pt-0.5">
            <ScrollButton up />
            <div className="flex-1 bg-[#dadada]"><div className="h-[104px] border border-[#ababab] bg-white" /></div>
            <ScrollButton />
          </div>
        </aside>
        <div className="flex min-w-0 flex-1 flex-col pl-px">
          <Editor />
          <textarea aria-label="Notes" placeholder="Click to add notes" className="h-[177px] shrink-0 resize-none border-t border-[#c0c0c0] pl-[13px] pt-[7px] text-[17px] outline-none placeholder:text-[#555]" />
        </div>
      </main>
      <StatusBar />
      <Taskbar />
    </div>
  );
}
